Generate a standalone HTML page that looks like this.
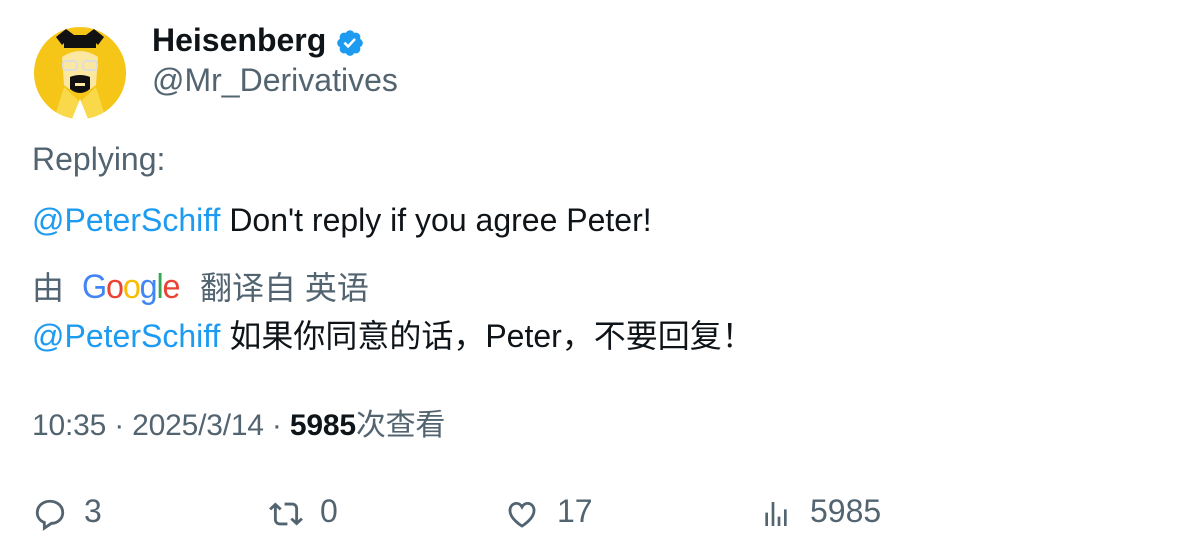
<!DOCTYPE html>
<html><head><meta charset="utf-8"><style>
body{margin:0;width:1196px;height:558px;background:#fff;font-family:"Liberation Sans","Noto Sans CJK SC",sans-serif;position:relative;overflow:hidden;color:#0f1419}
.a{position:absolute;white-space:nowrap}
.g{color:#536471}
.b{color:#1d9bf0}
</style></head><body>
<svg class="a" style="left:34px;top:27px" width="92" height="92" viewBox="0 0 92 92">
<defs><clipPath id="c"><circle cx="46" cy="46" r="46"/></clipPath></defs>
<g clip-path="url(#c)">
<rect width="92" height="92" fill="#f5c518"/>
<path d="M20 92 L30 60 L46 75 L62 60 L72 92Z" fill="#f9d94a"/>
<path d="M38 92 L46 72 L54 92Z" fill="#fff"/>
<path d="M28 30 Q46 18 64 30 L62 58 Q46 72 30 58Z" fill="#fbe7a0"/>
<path d="M22 10 L32 2 L40 8 L52 8 L60 2 L70 10 L64 18 L60 14 L32 14 L28 18Z" fill="#111"/>
<rect x="30" y="14" width="32" height="7" fill="#111"/>
<rect x="29" y="34" width="14" height="9" rx="3" fill="none" stroke="#ddd" stroke-width="2"/>
<rect x="49" y="34" width="14" height="9" rx="3" fill="none" stroke="#ddd" stroke-width="2"/>
<path d="M36 50 Q46 46 56 50 L56 62 Q46 70 36 62Z" fill="#111"/>
<rect x="41" y="56" width="10" height="3" fill="#fbe7a0"/>
</g></svg>
<div class="a" style="left:152px;top:22px;font-size:32px;font-weight:bold">Heisenberg</div>
<svg class="a" style="left:335px;top:28px" width="30" height="30" viewBox="0 0 24 24"><path fill="#1d9bf0" d="M22.25 12c0-1.430-.88-2.67-2.19-3.34.46-1.39.2-2.9-.81-3.91s-2.520-1.27-3.91-.81c-.66-1.31-1.91-2.19-3.34-2.19s-2.67.88-3.33 2.19c-1.4-.46-2.91-.2-3.920.81s-1.26 2.52-.8 3.91c-1.31.67-2.2 1.910-2.2 3.34s.89 2.670 2.2 3.34c-.46 1.39-.21 2.9.8 3.91s2.52 1.26 3.91.81c.67 1.31 1.91 2.19 3.34 2.19s2.68-.88 3.34-2.19c1.39.45 2.9.2 3.91-.81s1.27-2.52.81-3.91c1.31-.67 2.19-1.91 2.19-3.34z"/><path fill="#fff" d="M10.54 16.2l-3.74-3.740 1.41-1.42 2.26 2.26 4.8-5.23 1.47 1.36z"/></svg>
<div class="a g" style="left:152px;top:62px;font-size:32px">@Mr_Derivatives</div>
<div class="a g" style="left:32px;top:141px;font-size:32px">Replying:</div>
<div class="a" style="left:32px;top:202px;font-size:32px"><span class="b">@PeterSchiff</span> Don't reply if you agree Peter!</div>
<div class="a g" style="left:32px;top:263px;font-size:32px">由</div>
<div class="a" style="left:82px;top:268px;font-size:34px;letter-spacing:-1.2px;transform:scaleX(0.95);transform-origin:left"><span style="color:#4285f4">G</span><span style="color:#ea4335">o</span><span style="color:#fbbc05">o</span><span style="color:#4285f4">g</span><span style="color:#34a853">l</span><span style="color:#ea4335">e</span></div>
<div class="a g" style="left:200px;top:263px;font-size:32px">翻译自 英语</div>
<div class="a" style="left:32px;top:311px;font-size:32px"><span class="b">@PeterSchiff</span> 如果你同意的话，Peter，不要回复！</div>
<div class="a g" style="left:32px;top:400px;font-size:30px;letter-spacing:-0.2px">10:35 · 2025/3/14 · <b style="color:#0f1419">5985</b>次查看</div>
<svg class="a" style="left:33px;top:497px" width="34" height="34" viewBox="0 0 24 24"><path fill="none" stroke="#536471" stroke-width="2" d="M12 3c5 0 9 3.4 9 8s-4 7.6-8 7.6L8 22v-4C5 16.8 3 14.2 3 11 3 6.4 7 3 12 3z"/></svg>
<div class="a g" style="left:84px;top:493px;font-size:32px">3</div>
<svg class="a" style="left:268px;top:497px" width="36" height="34" viewBox="0 0 24 24"><path fill="#536471" d="M4.5 3.88l4.43 4.14-1.36 1.46L5.5 7.55V16c0 1.1.9 2 2 2H13v2H7.5c-2.21 0-4-1.79-4-4V7.55L1.43 9.48.07 8.02 4.5 3.88zM16.5 6H11V4h5.5c2.21 0 4 1.79 4 4v8.45l2.07-1.93 1.36 1.46-4.43 4.14-4.430-4.140 1.36-1.46 2.07 1.93V8c0-1.1-.9-2-2-2z"/></svg>
<div class="a g" style="left:320px;top:493px;font-size:32px">0</div>
<svg class="a" style="left:505px;top:497px" width="34" height="34" viewBox="0 0 24 24"><path fill="none" stroke="#536471" stroke-width="2" d="M12 20.5s-8.5-5-8.5-11C3.5 6.5 5.6 4.5 8 4.5c1.8 0 3.2 1 4 2.5.8-1.5 2.2-2.5 4-2.5 2.4 0 4.5 2 4.5 5 0 6-8.5 11-8.5 11z"/></svg>
<div class="a g" style="left:557px;top:493px;font-size:32px">17</div>
<svg class="a" style="left:760px;top:497px" width="32" height="34" viewBox="0 0 24 24"><path fill="#536471" d="M8.75 21V3h2v18h-2zM18 21V8.5h2V21h-2zM4 21l.004-10h2L6 21H4zm9.248 0v-7h2v7h-2z"/></svg>
<div class="a g" style="left:810px;top:493px;font-size:32px">5985</div>
</body></html>
